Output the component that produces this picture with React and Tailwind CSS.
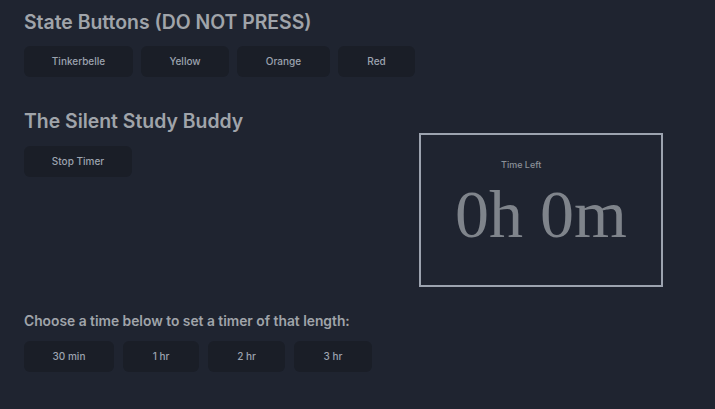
export default function App() {
  const font = { fontFamily: 'Inter, "Noto Sans", sans-serif' };
  const btn =
    "h-[31px] rounded-[6px] bg-[#1a1e27] text-[10px] font-medium text-[#9ca3af] flex items-center justify-center";
  return (
    <div className="min-h-[409px] w-full bg-[#1f2430] px-6 pt-[9px]" style={font}>
      <h2 className="text-[19.4px] font-semibold leading-[26px] text-[#a0a4aa]">
        State Buttons (DO NOT PRESS)
      </h2>
      <div className="mt-[11px] flex gap-2">
        <button className={`${btn} w-[109px]`}>Tinkerbelle</button>
        <button className={`${btn} w-[88px]`}>Yellow</button>
        <button className={`${btn} w-[93px]`}>Orange</button>
        <button className={`${btn} w-[77px]`}>Red</button>
      </div>
      <div className="mt-[31px] flex">
        <div className="flex-1">
          <h2 className="text-[19.4px] font-semibold leading-[26px] text-[#a0a4aa]">
            The Silent Study Buddy
          </h2>
          <button className={`${btn} mt-[12px] w-[108px]`}>Stop Timer</button>
        </div>
        <div className="mr-[28px] mt-[25px] flex h-[154px] w-[244px] flex-col border-2 border-[#9ca3af]">
          <div className="ml-[80px] mt-[23px] text-[9px] font-medium text-[#8b9098]">Time Left</div>
          <div
            className="mt-[12px] text-center text-[68px] leading-[60px] text-[#7f848b]"
            style={{ fontFamily: '"Liberation Serif", serif' }}
          >
            0h 0m
          </div>
        </div>
      </div>
      <h3 className="mt-[24px] text-[13.8px] font-semibold leading-[20px] text-[#a0a4aa]">
        Choose a time below to set a timer of that length:
      </h3>
      <div className="mt-[10px] flex gap-[9px]">
        <button className={`${btn} w-[90px]`}>30 min</button>
        <button className={`${btn} w-[76px]`}>1 hr</button>
        <button className={`${btn} w-[77px]`}>2 hr</button>
        <button className={`${btn} w-[78px]`}>3 hr</button>
      </div>
    </div>
  );
}
